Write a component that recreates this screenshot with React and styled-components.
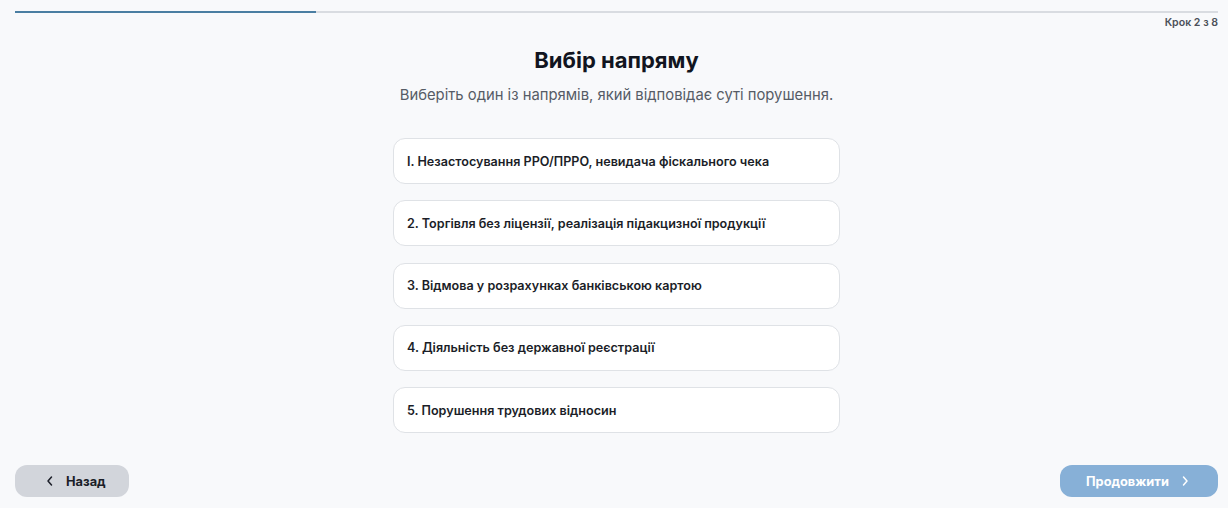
import React, { useState } from "react";
import styled, { createGlobalStyle } from "styled-components";

const Global = createGlobalStyle`
  html, body { margin: 0; padding: 0; background: #f8f9fb; }
  body { font-family: Inter, "Noto Sans", "DejaVu Sans", sans-serif; }
  * { box-sizing: border-box; }
`;

const Page = styled.div`
  min-height: 508px;
  display: flex;
  flex-direction: column;
  padding: 11px 10px 11px 15px;
`;

const Track = styled.div`
  height: 2px;
  background: #d9dce1;
  display: flex;
`;

const Fill = styled.div`
  height: 100%;
  background: #4a7ea2;
`;

const StepLabel = styled.div`
  text-align: right;
  font-size: 10.6px;
  font-weight: 600;
  color: #4b5059;
  line-height: 14px;
  margin-top: 3px;
`;

const Main = styled.div`
  display: flex;
  flex-direction: column;
  align-items: center;
  flex: 1;
`;

const Title = styled.h1`
  margin: 16px 0 0;
  font-size: 22px;
  line-height: 28px;
  font-weight: 700;
  color: #111520;
`;

const Subtitle = styled.p`
  margin: 11px 0 0;
  font-size: 14.8px;
  line-height: 20px;
  color: #565c66;
`;

const Options = styled.div`
  margin-top: 33px;
  width: 447px;
  display: flex;
  flex-direction: column;
  gap: 16.25px;
`;

const Option = styled.button`
  height: 46px;
  width: 100%;
  text-align: left;
  padding: 0 13px;
  background: #ffffff;
  border: 1px solid ${(p) => (p.$active ? "#4a7ea2" : "#dfe2e6")};
  border-radius: 12px;
  font-family: inherit;
  font-size: 12.6px;
  font-weight: 600;
  color: #1b1e28;
  cursor: pointer;
`;

const Footer = styled.div`
  display: flex;
  justify-content: space-between;
  align-items: center;
`;

const NavButton = styled.button`
  height: 32px;
  border: none;
  border-radius: 12px;
  display: flex;
  align-items: center;
  justify-content: flex-start;
  gap: ${(p) => p.$gap}px;
  padding: 0 0 0 ${(p) => p.$pl}px;
  font-family: inherit;
  font-size: 12.8px;
  font-weight: 700;
  background: ${(p) => (p.$primary ? "#87b0d7" : "#d2d5db")};
  color: ${(p) => (p.$primary ? "#ffffff" : "#1b1e28")};
  width: ${(p) => p.$w}px;
  cursor: pointer;
`;

const Chevron = ({ dir, color }) => (
  <svg width="10" height="12" viewBox="0 0 10 12" fill="none">
    <path
      d={dir === "left" ? "M6.5 2 L3 6 L6.5 10" : "M3.5 2 L7 6 L3.5 10"}
      stroke={color}
      strokeWidth="1.5"
      strokeLinecap="round"
      strokeLinejoin="round"
    />
  </svg>
);

const items = [
  "I. Незастосування РРО/ПРРО, невидача фіскального чека",
  "2. Торгівля без ліцензії, реалізація підакцизної продукції",
  "3. Відмова у розрахунках банківською картою",
  "4. Діяльність без державної реєстрації",
  "5. Порушення трудових відносин",
];

export default function App() {
  const [sel, setSel] = useState(null);
  return (
    <>
      <Global />
      <Page>
        <Track>
          <Fill style={{ width: `${(2 / 8) * 100}%` }} />
        </Track>
        <StepLabel>Крок 2 з 8</StepLabel>
        <Main>
          <Title>Вибір напряму</Title>
          <Subtitle>Виберіть один із напрямів, який відповідає суті порушення.</Subtitle>
          <Options>
            {items.map((t, i) => (
              <Option key={i} $active={sel === i} onClick={() => setSel(i)}>
                {t}
              </Option>
            ))}
          </Options>
        </Main>
        <Footer>
          <NavButton $w={114} $pl={30} $gap={11}>
            <Chevron dir="left" color="#1b1e28" />
            Назад
          </NavButton>
          <NavButton $primary $w={158} $pl={26} $gap={11}>
            Продовжити
            <Chevron dir="right" color="#ffffff" />
          </NavButton>
        </Footer>
      </Page>
    </>
  );
}
